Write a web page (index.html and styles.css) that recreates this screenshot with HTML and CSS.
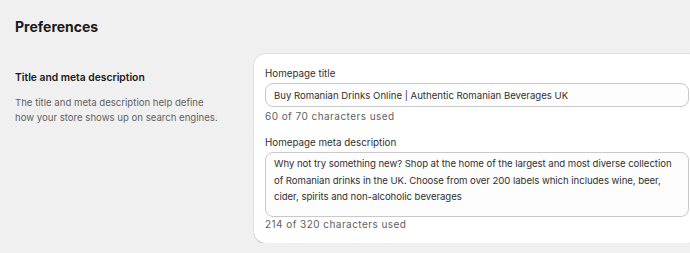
FILE: index.html
```html
<!DOCTYPE html>
<html>
<head>
  <title>Preferences</title>
  <link rel="stylesheet" href="styles.css">
</head>
<body>
  <div id="page">
    <h1 class="page-title">Preferences</h1>
    <div class="section">
      <div class="section-info">
        <h2>Title and meta description</h2>
        <p>The title and meta description help define how your store shows up on search engines.</p>
      </div>
      <div class="card">
        <div class="field">
          <label for="home-title">Homepage title</label>
          <input type="text" id="home-title" value="Buy Romanian Drinks Online | Authentic Romanian Beverages UK" />
          <div class="help">60 of 70 characters used</div>
        </div>
        <div class="field">
          <label for="home-desc">Homepage meta description</label>
          <textarea id="home-desc">Why not try something new? Shop at the home of the largest and most diverse collection of Romanian drinks in the UK. Choose from over 200 labels which includes wine, beer, cider, spirits and non-alcoholic beverages</textarea>
          <div class="help">214 of 320 characters used</div>
        </div>
      </div>
    </div>
  </div>
</body>
</html>
```

FILE: styles.css
```css
body {
  margin: 0;
  background-color: #f0f0f0;
  font-family: Inter, "Noto Sans", sans-serif;
  color: #303030;
  overflow: hidden;
}

#page {
  width: 700px;
  box-sizing: border-box;
  padding: 18px 0 0 15px;
}

.page-title {
  margin: 0 0 18px;
  font-size: 14px;
  font-weight: 700;
  color: #1a1a1a;
  line-height: 18px;
}

.section {
  display: flex;
  gap: 34px;
}

.section-info {
  width: 205px;
  flex: none;
  padding-top: 16px;
}

.section-info h2 {
  margin: 0 0 12px;
  font-size: 10.3px;
  font-weight: 600;
  line-height: 14px;
  color: #1a1a1a;
}

.section-info p {
  margin: 0;
  font-size: 9.6px;
  line-height: 14.5px;
  color: #616161;
}

.card {
  flex: 1;
  background-color: #fff;
  border-radius: 12px;
  box-shadow: 0 1px 0 rgba(0, 0, 0, 0.13), 0 0 0 1px rgba(0, 0, 0, 0.06);
  padding: 13px 11px 12px 11px;
}

.field {
  margin-bottom: 13px;
}

.field:last-child {
  margin-bottom: 0;
}

label {
  display: block;
  font-size: 9.8px;
  line-height: 14px;
  color: #303030;
  margin-bottom: 2px;
}

input,
textarea {
  display: block;
  width: 100%;
  box-sizing: border-box;
  margin: 0;
  font-family: inherit;
  font-size: 9.6px;
  color: #303030;
  border: 1px solid #c9c9c9;
  border-radius: 8px;
  background-color: #fdfdfd;
  padding: 0 8px;
}

input {
  height: 24px;
}

textarea {
  height: 65px;
  padding: 3px 7px 2px 8px;
  line-height: 16.5px;
  letter-spacing: -0.05px;
  resize: none;
}

.help {
  margin-top: 2px;
  font-size: 10px;
  letter-spacing: 0.45px;
  line-height: 14px;
  color: #616161;
}

.field:last-child .help {
  margin-top: 0;
}
```
